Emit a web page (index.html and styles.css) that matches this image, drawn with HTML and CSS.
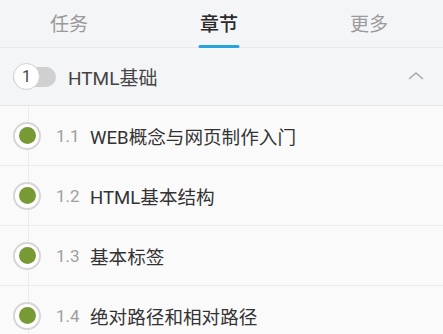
FILE: index.html
```html
<!DOCTYPE html>
<html>
    <head>
        <title>章节</title>
        <meta charset="UTF-8">
        <meta name="viewport" content="width=device-width, initial-scale=1.0">
        <link rel="stylesheet" href="styles.css">
    </head>
    <body>
        <div class="tabs">
            <div class="tab">任务</div>
            <div class="tab active">章节</div>
            <div class="tab">更多</div>
        </div>

        <div class="chapter">
            <div class="toggle">
                <span class="knob">1</span>
            </div>
            <span class="chapter-title">HTML基础</span>
            <svg class="chevron" width="18" height="10" viewBox="0 0 18 10">
                <path d="M2 8 L9 2 L16 8" fill="none" stroke="#aaa" stroke-width="1.6"/>
            </svg>
        </div>

        <ul class="lessons">
            <li class="lesson">
                <span class="dot"></span>
                <span class="num">1.1</span>
                <span class="name">WEB概念与网页制作入门</span>
            </li>
            <li class="lesson">
                <span class="dot"></span>
                <span class="num">1.2</span>
                <span class="name">HTML基本结构</span>
            </li>
            <li class="lesson">
                <span class="dot"></span>
                <span class="num">1.3</span>
                <span class="name">基本标签</span>
            </li>
            <li class="lesson">
                <span class="dot"></span>
                <span class="num">1.4</span>
                <span class="name">绝对路径和相对路径</span>
            </li>
        </ul>
    </body>
</html>
```

FILE: styles.css
```css
* {
    box-sizing: border-box;
    margin: 0;
    padding: 0;
}

body {
    font-family: Roboto, "Noto Sans CJK SC", sans-serif;
    background: #fafafa;
    color: #333;
    width: 443px;
    height: 334px;
    overflow: hidden;
    position: relative;
}

/* faint timeline behind the list */
body::before {
    content: '';
    position: absolute;
    left: 28px;
    top: 48px;
    bottom: 0;
    width: 1px;
    background: #ececec;
}

.tabs {
    display: grid;
    grid-template-columns: 138px 162px 138px;
    height: 48px;
    background: #f4f5f7;
    border-bottom: 1px solid #e8e9eb;
    position: relative;
    z-index: 1;
}

.tab {
    display: flex;
    justify-content: center;
    padding-top: 9px;
    font-size: 19px;
    color: #9a9a9a;
    position: relative;
}

.tab.active {
    color: #2a2a2a;
    font-weight: 500;
}

.tab.active::after {
    content: '';
    position: absolute;
    bottom: -1px;
    left: 50%;
    transform: translateX(-50%);
    width: 41px;
    height: 3px;
    background: #27a3de;
    border-radius: 2px;
}

.chapter {
    display: flex;
    align-items: center;
    height: 58px;
    padding: 0 18px 0 13px;
    background: #f4f5f7;
    border-bottom: 1px solid #e6e6e6;
    position: relative;
}

.toggle {
    width: 43px;
    height: 20px;
    background: #d0d0d0;
    border-radius: 10px;
    position: relative;
    margin-right: 12px;
}

.knob {
    position: absolute;
    left: 0;
    top: -4px;
    width: 27px;
    height: 27px;
    border-radius: 50%;
    background: #fff;
    border: 1.5px solid #cfcfcf;
    display: flex;
    align-items: center;
    justify-content: center;
    font-size: 16px;
    color: #444;
}

.chapter-title {
    font-size: 19px;
    color: #444;
    flex: 1;
}

.chevron {
    margin-top: -2px;
}

.lessons {
    list-style: none;
    position: relative;
}

.lesson {
    display: flex;
    align-items: center;
    height: 60px;
    padding-left: 13px;
    border-bottom: 1px solid #ececec;
}

.dot {
    width: 28px;
    height: 28px;
    border-radius: 50%;
    background: #fff;
    border: 2px solid #d6d6d6;
    display: flex;
    align-items: center;
    justify-content: center;
    margin-right: 15px;
}

.dot::after {
    content: '';
    width: 17px;
    height: 17px;
    border-radius: 50%;
    background: #779a35;
}

.num {
    font-size: 17px;
    color: #a0a0a0;
    width: 34px;
}

.name {
    font-size: 18.6px;
    color: #333;
}
```
